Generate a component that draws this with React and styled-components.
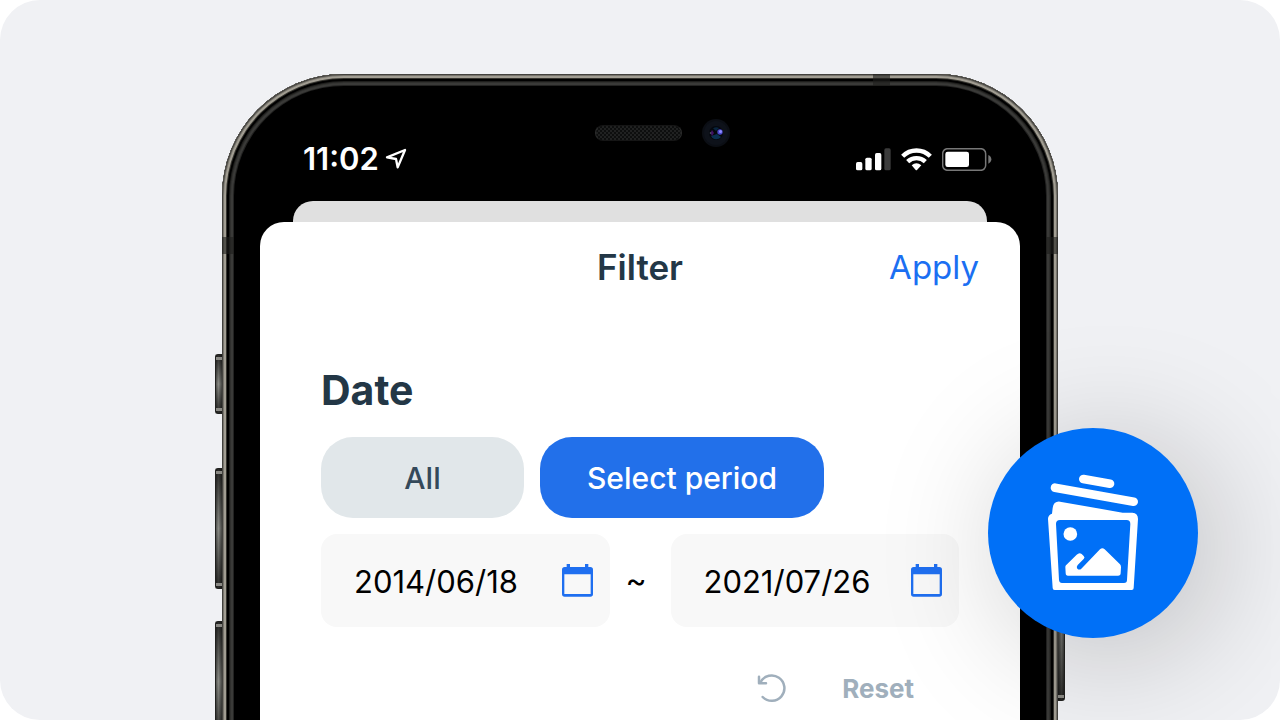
import React from "react";
import styled, { createGlobalStyle } from "styled-components";

const GlobalStyle = createGlobalStyle`
  *, *::before, *::after { box-sizing: border-box; }
  body {
    margin: 0;
    background: #ffffff;
    font-family: Inter, "Liberation Sans", sans-serif;
  }
  button, input { font: inherit; color: inherit; border: 0; margin: 0; padding: 0; background: none; }
  button { cursor: pointer; }
  svg { display: block; flex: none; }
`;

const Stage = styled.main`
  display: flex;
  flex-direction: column;
  align-items: center;
  min-height: 100vh;
  padding-top: 74px;
  overflow: hidden;
  border-radius: 40px;
  background: #f0f1f4;
`;

const Phone = styled.div`
  position: relative;
  display: flex;
  flex-direction: column;
  flex: 1 0 auto;
  width: 100%;
  max-width: 836px;
  margin-bottom: -16px;
  padding: 0 38px;
  border-radius: 122px 122px 0 0;
  background: #000000;
  box-shadow:
    inset 0 0 0 1px #43423e,
    inset 0 0 0 2px #77746c,
    inset 0 0 0 4px #a19d92,
    inset 0 0 0 5px #35342f,
    inset 0 0 0 7px #000000,
    inset 0 0 0 8px #1e1e1c,
    inset 0 0 0 9px #30302e,
    inset 0 0 0 11px #3a3a38,
    inset 0 0 0 12px #232322;
`;

const SideButton = styled.span`
  position: absolute;
  top: ${(p) => p.$top}px;
  ${(p) => p.$side}: -7px;
  width: 7px;
  height: ${(p) => p.$height}px;
  border: 1px solid #20201e;
  border-${(p) => (p.$side === "left" ? "right" : "left")}: 0;
  border-radius: ${(p) => (p.$side === "left" ? "3px 0 0 3px" : "0 3px 3px 0")};
  background:
    linear-gradient(#8a8984, #8a8984) 0 2px / 100% 3px no-repeat,
    linear-gradient(#8a8984, #8a8984) 0 calc(100% - 2px) / 100% 3px no-repeat,
    linear-gradient(to ${(p) => p.$side}, rgba(0, 0, 0, 0.5), transparent 60%, rgba(0, 0, 0, 0.4)),
    linear-gradient(#2a2a28, #8b8c86 50%, #2a2a28);
`;

const AntennaBand = styled.span`
  position: absolute;
  background: rgba(30, 30, 28, 0.6);
  ${(p) =>
    p.$edge === "top"
      ? "top: 0; right: 168px; width: 17px; height: 12px;"
      : `top: 163px; ${p.$edge}: 0; width: 12px; height: 17px;`}
`;

const Sensors = styled.div`
  display: grid;
  grid-template-columns: 1fr auto 1fr;
  align-items: center;
  column-gap: 20px;
  padding: 45px 4px 0 0;
`;

const Speaker = styled.span`
  grid-column: 2;
  width: 87px;
  height: 16px;
  border: 1px solid #2c2d2d;
  border-top-color: #151515;
  border-bottom-color: #151515;
  border-radius: 8px;
  background: repeating-conic-gradient(#202121 0 25%, #0d0e0e 0 50%) 0 0 / 4px 4px;
`;

const StatusBar = styled.div`
  display: flex;
  justify-content: space-between;
  align-items: center;
  height: 54px;
  padding: 0 28px 30px 43px;
`;

const StatusGroup = styled.div`
  display: flex;
  align-items: center;
  gap: ${(p) => p.$gap}px;
`;

const Clock = styled.time`
  color: #ffffff;
  font-size: 31px;
  font-weight: 600;
  line-height: 24px;
`;

const BackSheet = styled.div`
  height: 21px;
  margin: 0 33px;
  border-radius: 20px 20px 0 0;
  background: #e0e0e0;
`;

const Sheet = styled.section`
  flex: 1 0 auto;
  border-radius: 24px 24px 0 0;
  background: #ffffff;
`;

const SheetHeader = styled.header`
  display: grid;
  grid-template-columns: 1fr auto 1fr;
  align-items: center;
  height: 90px;
  padding: 0 41px;
`;

const Title = styled.h1`
  grid-column: 2;
  margin: 0;
  color: #233746;
  font-size: 35px;
  font-weight: 600;
  line-height: 42px;
`;

const ApplyButton = styled.button`
  justify-self: end;
  color: #1b6ff2;
  font-size: 33px;
  line-height: 44px;
`;

const Form = styled.form`
  padding: 54px 61px 8px;
`;

const SectionTitle = styled.h2`
  margin: 0 0 23px;
  color: #233746;
  font-size: 41px;
  font-weight: 700;
  line-height: 48px;
`;

const Choices = styled.div`
  display: flex;
  gap: 16px;
  margin-bottom: 16px;
`;

const Choice = styled.button`
  flex: 0 1 ${(p) => (p.$selected ? 284 : 203)}px;
  height: 81px;
  border-radius: 32px;
  background: ${(p) => (p.$selected ? "#2270ea" : "#e1e7ea")};
  color: ${(p) => (p.$selected ? "#ffffff" : "#34495a")};
  font-size: 30px;
  font-weight: 500;
  line-height: 36px;
`;

const Period = styled.div`
  display: grid;
  grid-template-columns: 1fr 61px 1fr;
  align-items: center;
  color: #000000;
  font-size: 32px;
`;

const Tilde = styled.span`
  padding-left: 16px;
`;

const DateField = styled.label`
  display: flex;
  align-items: center;
  min-width: 0;
  height: 93px;
  padding: 0 17px 0 33px;
  border-radius: 16px;
  background: #f8f8f8;
`;

const DateInput = styled.input`
  flex: 1;
  min-width: 0;
  height: 44px;
  padding-top: 2px;
  font-size: 31px;
`;

const ResetButton = styled.button`
  display: flex;
  align-items: center;
  gap: 55px;
  height: 48px;
  margin: 37px 45px 0 auto;
  color: #a0afbc;
  font-size: 26px;
  font-weight: 700;
`;

const AppBadge = styled.div`
  position: absolute;
  top: 354px;
  right: -140px;
  width: 210px;
  height: 210px;
  border-radius: 50%;
  background: #0070f7;
  box-shadow: 16px 16px 130px rgba(0, 0, 0, 0.22);
`;

const Camera = () => (
  <svg width="28" height="28" viewBox="0 0 28 28" aria-hidden="true">
    <circle cx="14" cy="14" r="14" fill="#0b0e14" />
    <circle cx="14" cy="14" r="12" fill="#0e121a" />
    <circle cx="14" cy="14" r="7" fill="#05080e" />
    <path d="M9 17a6 6 0 0 0 10 1l-4-3z" fill="#0a3050" />
    <path d="M11 9.500a6 6 0 0 1 6-.5l-3 3z" fill="#08243e" />
    <path d="M10 11a5 5 0 0 0 0 6l2-3z" fill="#3f1263" />
    <circle cx="18" cy="13" r="2.700" fill="#4a48c8" />
    <circle cx="18.500" cy="12.500" r="1.500" fill="#8f8cff" />
    <circle cx="8.500" cy="14" r=".8" fill="#63707c" />
  </svg>
);

const LocationArrow = () => (
  <svg width="22" height="22" viewBox="555 264 66 66" aria-hidden="true">
    <path
      d="M561 292 615 270 593 322 588 297Z"
      fill="none"
      stroke="#fff"
      strokeWidth="7"
      strokeLinejoin="round"
    />
  </svg>
);

const Signal = () => (
  <svg width="35" height="23" viewBox="47 248 105 69" role="img" aria-label="Signal">
    <g fill="#fff">
      <rect x="47" y="290" width="19" height="25" rx="5" />
      <rect x="75" y="277" width="19" height="38" rx="5" />
      <rect x="104" y="263" width="19" height="52" rx="5" />
    </g>
    <rect x="132" y="249" width="19" height="66" rx="5" fill="#3b3b3b" />
  </svg>
);

const Wifi = () => (
  <svg width="31" height="23" viewBox="182 247 93 69" role="img" aria-label="Wi-Fi">
    <g fill="none" stroke="#fff" strokeWidth="13">
      <path d="M187 272A58 58 0 0 1 270 272" />
      <path d="M202 288A38 38 0 0 1 255 288" />
    </g>
    <path d="M214 299Q228 287 243 299L230 313Q228 315 226 313Z" fill="#fff" />
  </svg>
);

const Battery = () => (
  <svg width="50" height="23" viewBox="306 248 150 69" role="img" aria-label="Battery">
    <rect x="308" y="250" width="129" height="65" rx="15" fill="none" stroke="#777" strokeWidth="4.500" />
    <rect x="316" y="259" width="71" height="46" rx="7" fill="#fff" />
    <path d="M445 269Q454 273 454 282T445 295Z" fill="#777" />
  </svg>
);

const CalendarIcon = () => (
  <svg width="31" height="33" viewBox="66 133 93 99" aria-hidden="true">
    <path
      fill="#1f6ff0"
      fillRule="evenodd"
      d="M80 133H90V142H135V133H145V142H151Q159 142 159 150V223Q159 231 151 231H74Q66 231 66 223V150Q66 142 74 142H80ZM73 164V223H152V164Z"
    />
  </svg>
);

const ResetIcon = () => (
  <svg width="30" height="30" viewBox="651 459 90 90" aria-hidden="true">
    <g fill="none" stroke="currentColor" strokeWidth="7.500" strokeLinecap="round" strokeLinejoin="round">
      <path d="M668 531A38 38 0 1 0 662 486" />
      <path d="M657 470V490H678" />
    </g>
  </svg>
);

const GalleryLogo = () => (
  <svg width="100%" height="100%" viewBox="24 24 630 630" role="img" aria-label="Photo cleaner">
    <g stroke="#fff" strokeWidth="26" strokeLinecap="round">
      <path d="M310 177 390 191" />
      <path d="M225 203 461 245" />
    </g>
    <path
      fill="#fff"
      fillRule="evenodd"
      d="M216 281 218 264Q221 243 240 245L428 278H457Q474 279 474 297L461 504Q461 510 455 510H224Q218 510 218 504L204 297Q204 285 216 281ZM240 300Q228 300 228 312L237 480Q238 489 246 489H432Q441 489 441 480L451 312Q451 300 440 300Z"
    />
    <circle cx="271" cy="342" r="20.500" fill="#fff" />
    <path
      fill="#fff"
      d="M258 436 290 404Q298 396 305 402L311 408Q316 412 311 417L293 435Q288 441 292 446Q298 451 304 446L360 388Q367 381 374 388L420 433Q423 436 423 442L422 459Q422 467 414 467H264Q257 467 257 459L256 442Q256 438 258 436Z"
    />
  </svg>
);

export default function App() {
  return (
    <>
      <GlobalStyle />
      <Stage>
        <Phone>
          <SideButton $side="left" $top={280} $height={60} />
          <SideButton $side="left" $top={394} $height={121} />
          <SideButton $side="left" $top={547} $height={121} />
          <SideButton $side="right" $top={440} $height={187} />
          <AntennaBand $edge="top" />
          <AntennaBand $edge="left" />
          <AntennaBand $edge="right" />

          <Sensors>
            <Speaker />
            <Camera />
          </Sensors>
          <StatusBar>
            <StatusGroup $gap={6}>
              <Clock>11:02</Clock>
              <LocationArrow />
            </StatusGroup>
            <StatusGroup $gap={10}>
              <Signal />
              <Wifi />
              <Battery />
            </StatusGroup>
          </StatusBar>

          <BackSheet />
          <Sheet>
            <SheetHeader>
              <Title>Filter</Title>
              <ApplyButton type="submit" form="filter">Apply</ApplyButton>
            </SheetHeader>
            <Form id="filter" onSubmit={(e) => e.preventDefault()}>
              <SectionTitle>Date</SectionTitle>
              <Choices>
                <Choice type="button" aria-pressed="false">All</Choice>
                <Choice type="button" aria-pressed="true" $selected>Select period</Choice>
              </Choices>
              <Period>
                <DateField>
                  <DateInput type="text" aria-label="Start date" defaultValue="2014/06/18" />
                  <CalendarIcon />
                </DateField>
                <Tilde>~</Tilde>
                <DateField>
                  <DateInput type="text" aria-label="End date" defaultValue="2021/07/26" />
                  <CalendarIcon />
                </DateField>
              </Period>
              <ResetButton type="reset">
                <ResetIcon />
                Reset
              </ResetButton>
            </Form>
          </Sheet>

          <AppBadge>
            <GalleryLogo />
          </AppBadge>
        </Phone>
      </Stage>
    </>
  );
}
